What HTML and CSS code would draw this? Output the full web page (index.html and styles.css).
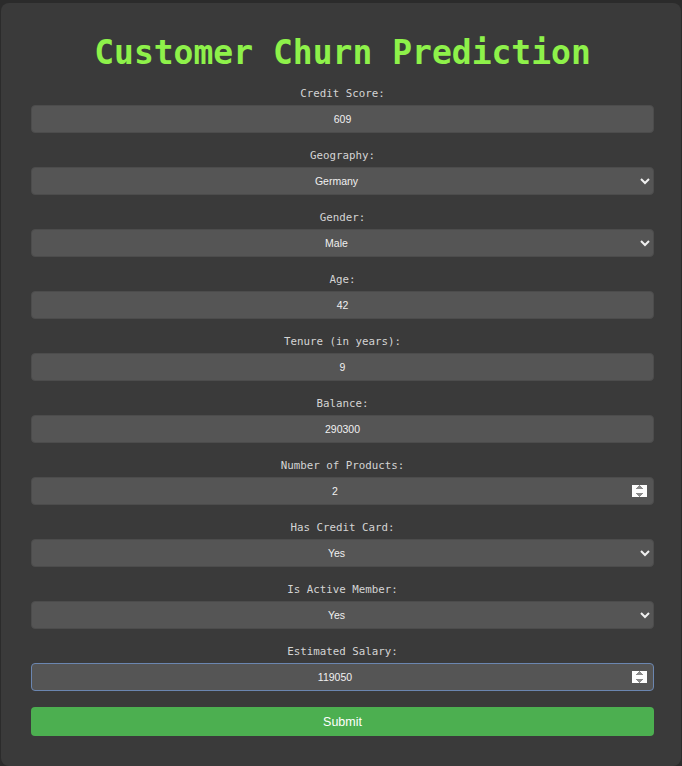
FILE: index.html
```html
<!DOCTYPE html>
<html lang="en">
<head>
<meta charset="utf-8">
<title>Customer Churn Prediction</title>
<link rel="stylesheet" href="styles.css">
</head>
<body>
<div class="container">
  <h1 class="title">Customer Churn Prediction</h1>
  <form class="form">
    <div class="field">
      <label class="label" for="cs">Credit Score:</label>
      <input class="control" id="cs" type="text" value="609">
    </div>
    <div class="field">
      <label class="label" for="geo">Geography:</label>
      <select class="control" id="geo"><option>France</option><option selected>Germany</option><option>Spain</option></select>
    </div>
    <div class="field">
      <label class="label" for="gender">Gender:</label>
      <select class="control" id="gender"><option selected>Male</option><option>Female</option></select>
    </div>
    <div class="field">
      <label class="label" for="age">Age:</label>
      <input class="control" id="age" type="text" value="42">
    </div>
    <div class="field">
      <label class="label" for="tenure">Tenure (in years):</label>
      <input class="control" id="tenure" type="text" value="9">
    </div>
    <div class="field">
      <label class="label" for="bal">Balance:</label>
      <input class="control" id="bal" type="text" value="290300">
    </div>
    <div class="field">
      <label class="label" for="np">Number of Products:</label>
      <input class="control num" id="np" type="number" value="2">
    </div>
    <div class="field">
      <label class="label" for="cc">Has Credit Card:</label>
      <select class="control" id="cc"><option selected>Yes</option><option>No</option></select>
    </div>
    <div class="field">
      <label class="label" for="am">Is Active Member:</label>
      <select class="control" id="am"><option selected>Yes</option><option>No</option></select>
    </div>
    <div class="field">
      <label class="label" for="sal">Estimated Salary:</label>
      <input class="control num focused" id="sal" type="number" value="119050">
    </div>
    <button class="submit" type="button">Submit</button>
  </form>
</div>
</body>
</html>
```

FILE: styles.css
```css
html, body {
  margin: 0;
  padding: 0;
  background: #2b2b2b;
}

body {
  padding: 3px 1px 3px 1px;
  font-family: "DejaVu Sans Mono", monospace;
}

.container {
  background: #3a3a3a;
  border-radius: 8px;
  padding: 30px 27px 28px 30px;
  min-height: 705px;
}

.title {
  margin: 0 0 14px;
  font-family: "DejaVu Sans Mono", monospace;
  font-size: 33px;
  line-height: 40px;
  font-weight: bold;
  color: #8ef14a;
  text-align: center;
}

.form {
  display: flex;
  flex-direction: column;
  gap: 16px;
}

.field {
  display: flex;
  flex-direction: column;
  gap: 5px;
}

.label {
  display: block;
  font-family: "DejaVu Sans Mono", monospace;
  font-size: 10.8px;
  line-height: 13px;
  color: #d4d4d4;
  text-align: center;
}

.control {
  box-sizing: border-box;
  width: 100%;
  height: 28px;
  margin: 0;
  padding: 0 6px;
  background: #555555;
  color: #f0f0f0;
  border: 1px solid #4c4c4c;
  border-radius: 4px;
  font-family: "Liberation Sans", Arial, sans-serif;
  font-size: 10.5px;
  text-align: center;
  text-align-last: center;
  outline: none;
}

.num::-webkit-inner-spin-button {
  opacity: 1;
}

.focused {
  border-color: #6b86b0;
}

.submit {
  box-sizing: border-box;
  width: 100%;
  height: 29px;
  margin: 0;
  border: none;
  border-radius: 4px;
  background: #4caf50;
  color: #ffffff;
  font-family: "Liberation Sans", Arial, sans-serif;
  font-size: 12.5px;
  cursor: pointer;
}
```
